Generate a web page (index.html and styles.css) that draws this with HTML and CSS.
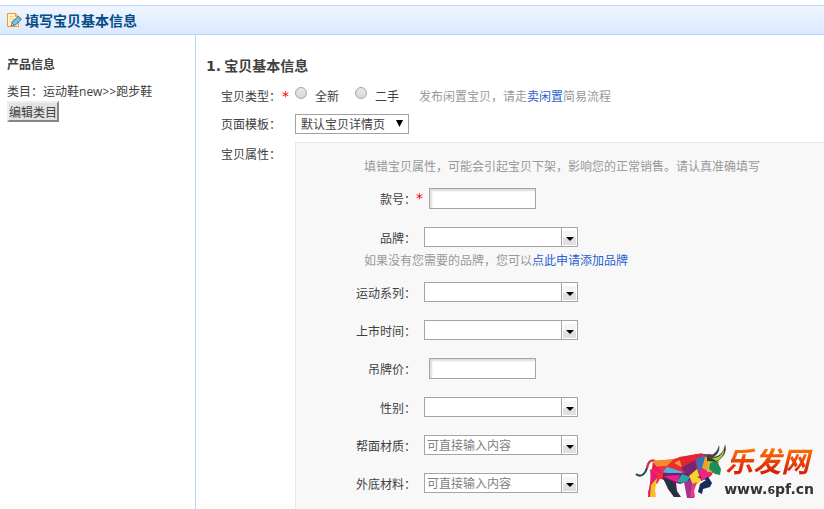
FILE: index.html
```html
<!DOCTYPE html>
<html lang="zh-CN">
<head>
<meta charset="utf-8">
<title>填写宝贝基本信息</title>
<link rel="stylesheet" href="styles.css">
</head>
<body>
<header class="page-head">
  <svg class="edit-icon" viewBox="0 0 16 16" aria-hidden="true">
    <path d="M1.500 1.500h8l3 3v10h-11z" fill="#fff6d8" stroke="#f39a1e"/>
    <path d="M9.500 1.500v3h3z" fill="#ffd27a" stroke="#f39a1e"/>
    <path d="M3.500 4.500h4M3.500 7h6M3.500 9.500h4" stroke="#f3c766"/>
    <path d="M5.500 13.500l1-4 6-5 3 2.500-6 6z" fill="#7cc0ec" stroke="#356f9c"/>
    <path d="M5 14l1-3 2 2z" fill="#f4d9a8" stroke="#555" stroke-width=".5"/>
  </svg>
  <h1 class="page-title">填写宝贝基本信息</h1>
</header>
<div class="columns">
  <aside class="side">
    <h2 class="side-title">产品信息</h2>
    <p class="category">类目：运动鞋<span class="latin">new&gt;&gt;</span>跑步鞋</p>
    <button class="edit-button" type="button">编辑类目</button>
  </aside>
  <main class="main">
    <h2 class="section-title"><span class="number">1.</span> 宝贝基本信息</h2>
    <form class="form">
      <div class="row row-type">
        <span class="row-label">宝贝类型：</span><span class="star">*</span>
        <div class="choices">
          <label class="choice"><input class="radio" type="radio" name="kind"><span>全新</span></label>
          <label class="choice"><input class="radio" type="radio" name="kind"><span>二手</span></label>
          <span class="note">发布闲置宝贝，请走<a class="link" href="#">卖闲置</a>简易流程</span>
        </div>
      </div>
      <div class="row row-template">
        <label class="row-label" for="template">页面模板：</label><span class="star"></span>
        <div class="select-wrap">
          <select class="template" id="template"><option>默认宝贝详情页</option></select>
          <svg class="select-arrow" viewBox="0 0 8 8" aria-hidden="true"><path d="M0 0h7L3.500 7z"/></svg>
        </div>
      </div>
      <div class="row row-props">
        <span class="row-label">宝贝属性：</span><span class="star"></span>
        <div class="panel">
          <p class="note">填错宝贝属性，可能会引起宝贝下架，影响您的正常销售。请认真准确填写</p>
          <div class="field"><label class="field-label" for="f1">款号：</label><span class="star">*</span><input class="text" id="f1" type="text"></div>
          <div class="field"><label class="field-label" for="f2">品牌：</label><div class="combo"><input class="combo-input" id="f2" type="text"><button class="combo-button" type="button" aria-label="展开"></button></div></div>
          <p class="note field-note">如果没有您需要的品牌，您可以<a class="link" href="#">点此申请添加品牌</a></p>
          <div class="field"><label class="field-label" for="f3">运动系列：</label><div class="combo"><input class="combo-input" id="f3" type="text"><button class="combo-button" type="button" aria-label="展开"></button></div></div>
          <div class="field"><label class="field-label" for="f4">上市时间：</label><div class="combo"><input class="combo-input" id="f4" type="text"><button class="combo-button" type="button" aria-label="展开"></button></div></div>
          <div class="field"><label class="field-label" for="f5">吊牌价：</label><span class="star"></span><input class="text" id="f5" type="text"></div>
          <div class="field"><label class="field-label" for="f6">性别：</label><div class="combo"><input class="combo-input" id="f6" type="text"><button class="combo-button" type="button" aria-label="展开"></button></div></div>
          <div class="field"><label class="field-label" for="f7">帮面材质：</label><div class="combo"><input class="combo-input" id="f7" type="text" placeholder="可直接输入内容"><button class="combo-button" type="button" aria-label="展开"></button></div></div>
          <div class="field"><label class="field-label" for="f8">外底材料：</label><div class="combo"><input class="combo-input" id="f8" type="text" placeholder="可直接输入内容"><button class="combo-button" type="button" aria-label="展开"></button></div></div>
        </div>
      </div>
    </form>
  </main>
</div>
<div class="brand">
  <svg class="bull" viewBox="0 0 98 60" aria-hidden="true">
    <path d="M20 21C15 19 13 23 12 28C10 34 6 38 1 34" fill="none" stroke="#1f4a55" stroke-width="2"/>
    <path d="M20 21C15 19 13 23 12 28" fill="none" stroke="#e0334a" stroke-width="2"/>
    <path d="M18 21l24-2 20-5 14 0 8 8-8 14-10 5-28 2-18-6-6 20h-1z" fill="#e2243a"/>
    <path d="M17 21l25-2-3 7-17 1z" fill="#f58a2a"/>
    <path d="M19 27l14-1-6 7-10 8z" fill="#e8187f"/>
    <path d="M24 28l15-3 4 6-14 5z" fill="#ee3338"/>
    <path d="M39 19l6-2 5 14-18-5z" fill="#ef2b2f"/>
    <path d="M32 27l16 5-5 3-15-3z" fill="#45b8e8"/>
    <path d="M39 23l10-5 8 9-3 4z" fill="#f39b2e"/>
    <path d="M44 17l24-4-6 6-15 9z" fill="#e32531"/>
    <path d="M46 28l14-8 2 9-8 8z" fill="#7b2470"/>
    <path d="M61 19l11-5 3 7-12 11z" fill="#3473b8"/>
    <path d="M28 33l24 0 7 6-14 5-17-5z" fill="#6f236e"/>
    <path d="M29 36l16-1-3 8z" fill="#eb1d8f"/>
    <path d="M47 34l8 3-4 6-9-1z" fill="#20a9a8"/>
    <path d="M16 29l12 5-6 10-5-3z" fill="#ef3140"/>
    <path d="M15 29l8 7-3 9-3 12h-3l-1-5 3-9z" fill="#e6197a"/>
    <path d="M22 38l-2 12 1 7h-6l1-12z" fill="#f8c21d"/>
    <path d="M28 38l13 4 1 9 4 6h-7l-6-8z" fill="#51204b"/>
    <path d="M28 38l9 4 7 15h-5z" fill="#1d3740"/>
    <path d="M49 42l15-4-5 11 0 9h-7z" fill="#a8338d"/>
    <path d="M54 36l8-7 4 12-7 6z" fill="#f6d42b"/>
    <path d="M57 44l5-2-3 9 1 6h-5z" fill="#e9398c"/>
    <path d="M62 37l10-2 5 8-2 4-7 2-1 5-4-2 2-8 6-4z" fill="#172a5c"/>
    <path d="M64 31l12-8-1 12-8 6z" fill="#ea258c"/>
    <path d="M70 17l10-1-3 17-10-5z" fill="#f49d2c"/>
    <path d="M74 19l10 1-2 10-10 2z" fill="#b7d336"/>
    <path d="M75 23l7-2 4 8-1 6-5-1-6-5z" fill="#1c8d58"/>
    <path d="M72 17c9 2 17-3 18-13 3 8-3 15-9 18l-9-1z" fill="#30412d"/>
    <path d="M77 18c8 1 11-6 12-9 1 5-4 11-8 12z" fill="#a8cc3d"/>
    <path d="M67 14c8 4 15 0 17-9 2 7-4 13-10 13z" fill="#38464a"/>
  </svg>
  <div class="brand-text"><span class="brand-name">乐发网</span><span class="brand-url">www.<small class="six">6</small>pf.cn</span></div>
</div>
</body>
</html>
```
FILE: styles.css
```css
* { box-sizing: border-box; }
body {
  margin: 0;
  padding-top: 5px;
  min-height: 100vh;
  display: flex;
  flex-direction: column;
  overflow: hidden;
  background: #fff;
  color: #404040;
  font: 12px/18px "Noto Sans CJK SC", sans-serif;
}
h1, h2, p { margin: 0; }
input, button, select { font: inherit; color: inherit; margin: 0; }
.latin { font-family: "Open Sans", sans-serif; }
.number { font-family: "DejaVu Sans", sans-serif; }
.link { color: #2a5fd0; text-decoration: none; }
.note { color: #999; white-space: nowrap; }

.page-head {
  display: flex;
  align-items: center;
  gap: 3px;
  height: 30px;
  padding-left: 6px;
  border: solid #b8d5fc;
  border-width: 1px 0;
  background: linear-gradient(#eff6ff, #d9e9ff);
}
.edit-icon { width: 16px; height: 16px; }
.page-title { font-size: 14px; line-height: 20px; color: #064b86; }

.columns { flex: 1; display: flex; }
.side { width: 196px; padding: 20px 7px; border-right: 1px solid #b8d5fc; }
.side-title { font-size: 12px; line-height: 18px; margin-bottom: 9px; }
.edit-button {
  display: block;
  height: 21px;
  padding: 0;
  border: 2px solid;
  border-color: #eee #858585 #858585 #eee;
  border-radius: 0;
  background: #e2e2e2;
  line-height: 16px;
}
.main { flex: 1; min-width: 0; padding: 20px 0 0 10px; }
.section-title { font-size: 14px; line-height: 20px; }

.form { padding-left: 15px; }
.row { display: flex; align-items: flex-start; }
.row-label { width: 61px; line-height: 20px; white-space: nowrap; }
.star { width: 13px; color: #f00; font: 14px/20px "DejaVu Sans", sans-serif; }
.row-type { padding-top: 10px; }
.choices { display: flex; align-items: center; height: 20px; }
.choice { display: flex; width: 60px; gap: 8px; line-height: 20px; }
.choices .note { padding-left: 4px; }
.radio {
  appearance: none;
  width: 12px;
  height: 12px;
  margin-top: 1px;
  border: 1px solid #a5a5a5;
  border-radius: 50%;
  background: linear-gradient(#e8e8e8, #d8d8d8);
}
.row-template { padding-top: 8px; }
.select-wrap { position: relative; margin-bottom: 8px; }
.template {
  display: block;
  appearance: none;
  width: 114px;
  height: 20px;
  padding: 0 5px;
  border: 1px solid #a2a2a2;
  border-radius: 0;
  background: #fff;
  line-height: 18px;
}
.select-arrow { position: absolute; right: 5px; top: 6px; width: 8px; height: 8px; fill: #000; }
.row-props > .row-label { padding-top: 2px; }
.panel {
  flex: 1;
  display: flex;
  flex-direction: column;
  gap: 18px;
  padding: 14px 0 24px 45px;
  border: solid #e8e8e8;
  border-width: 1px 0 0 1px;
  background: #f8f8f8;
}
.panel .note { padding-left: 23px; margin-bottom: -5px; }
.panel .field-note { height: 17px; margin: -18px 0 0; padding-top: 4px; }
.field { display: flex; align-items: flex-start; }
.field-label { width: 75px; padding-top: 2px; text-align: right; }
.text {
  width: 107px;
  height: 21px;
  padding: 0 3px;
  border: 1px solid #a5a5a5;
  background: #fff;
  box-shadow: inset 2px 2px 2px #ddd;
}
.combo {
  display: flex;
  width: 154px;
  height: 20px;
  margin-left: 8px;
  border: 1px solid #a5a5a5;
  background: #fff;
}
.combo-input { flex: 1; min-width: 0; padding: 0 2px; border: 0; background: none; }
.combo-input::placeholder { color: #808080; opacity: 1; }
.combo-button {
  display: flex;
  align-items: flex-end;
  justify-content: center;
  width: 15px;
  padding: 0 0 4px;
  border: solid #fff;
  border-width: 3px 1px 1px;
  background: linear-gradient(#f5f5f5 50%, #e0e0e0 50%);
  box-shadow: -1px 0 #a5a5a5;
}
.combo-button::before { content: ""; border: solid transparent; border-width: 4px 4px 0; border-top-color: #000; }

.brand { position: fixed; right: 10px; bottom: 9px; display: flex; }
.bull { width: 98px; height: 60px; margin-right: -9px; }
.brand-text { display: flex; flex-direction: column; }
.brand-name {
  padding-left: 1px;
  font: italic bold 28px/40px "Noto Sans CJK SC", sans-serif;
  color: transparent;
  background: linear-gradient(#ff7200 20%, #d8200a 80%);
  background-clip: text;
}
.brand-url { font: bold 14px/18px "DejaVu Sans", sans-serif; color: #333; }
.six { font-size: 11px; }
```
